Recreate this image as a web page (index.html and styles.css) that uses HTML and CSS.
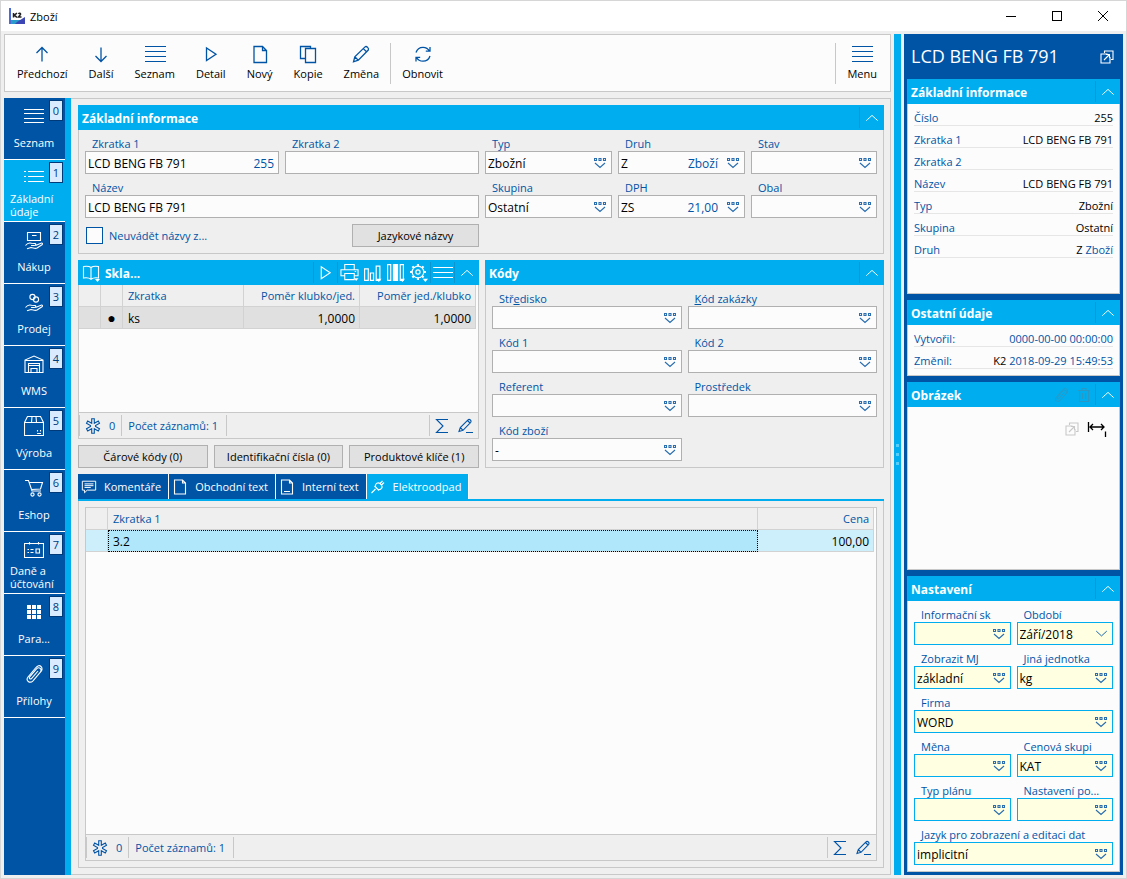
FILE: index.html
```html
<!DOCTYPE html>
<html lang="cs">
<head>
<meta charset="utf-8">
<title>Zboží</title>
<link rel="stylesheet" href="styles.css">
</head>
<body>
<svg class="sprite" aria-hidden="true">
  <symbol id="i-up" viewBox="0 0 20 20"><path d="M10 17.500V3.500M4.500 9L10 3.500 15.500 9"/></symbol>
  <symbol id="i-down" viewBox="0 0 20 20"><path d="M10 3.500v14M4.500 12L10 17.500 15.500 12"/></symbol>
  <symbol id="i-lines" viewBox="0 0 22 20"><path d="M.5 2.500h21M.5 7.500h21M.5 12.500h21M.5 17.500h21"/></symbol>
  <symbol id="i-play" viewBox="0 0 20 20"><path d="M5.500 4v12.500L15 10.200z"/></symbol>
  <symbol id="i-page" viewBox="0 0 20 20"><path d="M4 2.500h8.500l4 4v12H4zM12.500 2.500v4h4"/></symbol>
  <symbol id="i-copy" viewBox="0 0 20 20"><path d="M7.500 14.500H2.500V2.500h10v2M7.500 4.500h10v14h-10z"/></symbol>
  <symbol id="i-pencil" viewBox="0 0 20 20"><path d="M2.500 17.800l1.300-5L14 2.900c1.600-1.200 4.300 1.400 3.300 3.100L7.300 16.200zM3.800 12.800L7.300 16.200M12.300 4.600l3.200 3.200"/></symbol>
  <symbol id="i-refresh" viewBox="0 0 20 20"><path d="M3 8.500C4 5.300 6.800 3.300 10 3.300c3 0 5.200 1.400 6.600 4M17 3v4.200h-4.200M17 12c-1 3.200-3.800 5.200-7 5.200-3 0-5.200-1.400-6.600-4M3 17.500v-4.200h4.200"/></symbol>
  <symbol id="i-list" viewBox="0 0 20 20"><path d="M4 3.500h16M4 8.500h16M4 13.500h16M0 3.500h2M0 8.500h2M0 13.500h2"/></symbol>
  <symbol id="i-buy" viewBox="0 0 20 20"><path d="M3.500 2.500h13v8h-13zM8 5.500h4.500M1.500 15.500c2-2.500 4-3 6-2.200l3.500.2c1.500.5.5 2-1 2H7M11.500 15.500l5.500-2.300c1.500-.5 2 .7 1 1.500l-5 3.300c-2 1.200-4-.5-6-.5l-4 1.200"/></symbol>
  <symbol id="i-sell" viewBox="0 0 20 20"><path d="M1.500 15.500c2-2.500 4-3 6-2.200l3.500.2c1.500.5.5 2-1 2H7M11.500 15.500l5.500-2.300c1.500-.5 2 .7 1 1.500l-5 3.300c-2 1.200-4-.5-6-.5l-4 1.200"/><circle cx="8.500" cy="5" r="2.600"/><circle cx="12" cy="7.500" r="2.600"/></symbol>
  <symbol id="i-wms" viewBox="0 0 20 20"><path d="M1 18.500V6L10 2l9 4v12.500zM4.500 18.500v-9h11v9M4.500 11.500h11M1 6.500h18M7 18.500v-4h6v4"/></symbol>
  <symbol id="i-box" viewBox="0 0 20 20"><path d="M.5 6.500L3.500.5h13l3 6v13H.5zM.5 6.500h19M8 .5l-.5 6M12 .5l.5 6M13.500 14v1.500M16.500 14v1.500M13 17.500h4"/></symbol>
  <symbol id="i-cart" viewBox="0 0 20 20"><path d="M1 2.500h3.500l3.500 10.500h9M5.300 4.500H18.500l-2 6.500-9.200.5"/><circle cx="8.500" cy="16.500" r="1.600"/><circle cx="15.500" cy="16.500" r="1.600"/></symbol>
  <symbol id="i-tax" viewBox="0 0 20 20"><path d="M.5 3.500h19v14H.5zM5.500 2v2.500M14.500 2v2.500M3.500 9.500H5M6.500 9.500h3M3.500 12.500H5M6.500 12.500h3M12 9h3.500v4H12z"/></symbol>
  <symbol id="i-grid" viewBox="0 0 20 20"><path class="solid" d="M3 3h4v4H3zM8 3h4v4H8zM13 3h4v4h-4zM3 8h4v4H3zM8 8h4v4H8zM13 8h4v4h-4zM3 13h4v4H3zM8 13h4v4H8zM13 13h4v4h-4z"/></symbol>
  <symbol id="i-clip" viewBox="0 0 20 20"><path d="M14 7l-6.500 7.500c-1.300 1.300-3-.2-1.800-1.700L12.500 4.800c2.700-2.600 6 .6 3.900 3.300L9 16.800c-3.200 3.200-7.700-.2-5-3.800L11.500 4C13.800 1.500 15.500 1 17 2.500s1.500 3.800-.6 5.600"/></symbol>
  <symbol id="i-chev" viewBox="0 0 16 10"><path d="M1.500 8L8 2l6.500 6"/></symbol>
  <symbol id="i-pick" viewBox="0 0 12 12"><path d="M.5 1.500h2v2h-2zM5 1.500h2v2H5zM9.500 1.500h2v2h-2zM1 6l5 4.500L11 6"/></symbol>
  <symbol id="i-book" viewBox="0 0 18 18"><path d="M9 3.500C7 2 4.500 2 1.500 2.500v11.500c3-.5 5.500-.3 7.500 1.200 2-1.500 4.500-1.700 7.500-1.200V2.500C13.500 2 11 2 9 3.500zM9 3.500v11.700"/><path class="solid" d="M13 15h5l-2.500 3z"/></symbol>
  <symbol id="i-print" viewBox="0 0 20 20"><path d="M5 7V1.500h10V7M5 13.500H1V7h18v6.500h-4M5 11h10v6.500H5zM15.500 9h1.500"/><path class="solid" d="M14.500 16h5L17 19z"/></symbol>
  <symbol id="i-chart" viewBox="0 0 18 18"><path d="M1.500 5.500h3.500v11H1.500zM7 9.500h3v7H7zM12.500 3H16v13.500h-3.500z"/><path class="solid" d="M12.500 15h5L15 18z"/></symbol>
  <symbol id="i-cols" viewBox="0 0 18 18"><path d="M1.500 1.500h3v15h-3zM13.500 1.500h3v15h-3z"/><path class="solid" d="M6.500 1h5v16h-5zM13 15h5l-2.500 3z"/></symbol>
  <symbol id="i-gear" viewBox="0 0 18 18"><circle cx="8.500" cy="8.500" r="5.500"/><circle cx="8.500" cy="8.500" r="2"/><path stroke-width="2" d="M8.500 1v2M8.500 14v2M1 8.500h2M14 8.500h2M3.200 3.200l1.400 1.400M12.400 12.400l1.400 1.400M3.200 13.800l1.400-1.400M12.400 4.600l1.400-1.400"/><path class="solid" d="M13 15h5l-2.500 3z"/></symbol>
  <symbol id="i-star" viewBox="0 0 16 16"><path d="M6.700.8h2.600v4.500l4-2.300 1.200 2.200-4 2.300v1l4 2.300-1.200 2.200-4-2.300v4.500H6.700v-4.500l-4 2.300-1.200-2.200 4-2.300v-1l-4-2.300L2.700 3l4 2.300z"/></symbol>
  <symbol id="i-sum" viewBox="0 0 14 16"><path d="M13 1.500H1.500L8 8l-6.500 6.500H13"/></symbol>
  <symbol id="i-edit" viewBox="0 0 16 16"><path d="M1 13.500L2.300 9.500 10 1.800c1.500-1.300 4 1 2.700 2.600L5 12.300zM9.500 2.500l2.500 2.500M2.300 9.500L5 12.300M8 14.500h7"/></symbol>
  <symbol id="i-note" viewBox="0 0 18 16"><path d="M1.500 1.500h15v10H7l-3 3v-3H1.500zM4 4.500h10M4 6.500h10M4 8.500h7"/></symbol>
  <symbol id="i-doc" viewBox="0 0 14 16"><path d="M1.500 1h8l3 3v11h-11zM9.500 1v3h3"/></symbol>
  <symbol id="i-doc2" viewBox="0 0 14 16"><path d="M1.500 1h8l3 3v11h-11zM9.500 1v3h3M4 12.500h6"/></symbol>
  <symbol id="i-plug" viewBox="0 0 16 16"><path d="M1.500 14l4-4M4.500 7l4.500 4.500M5.500 7.500C5 5 7.500 2.800 10 4.500l1.500 1.500c1.700 2.500-.5 5-3 4.500M10 4.500L12.500 2M11.500 6L14 3.500"/></symbol>
  <symbol id="i-ext" viewBox="0 0 14 14"><path d="M4.500 3V1H13v8.500h-2M7.500 4H1v9h9V7M4 10l5.500-5.500M6 4.500h3.500V8"/></symbol>
  <symbol id="i-trash" viewBox="0 0 14 16"><path d="M1 3.500h12M5 3V1.500h4V3M2.500 3.500v11h9v-11M5.500 6v6M8.500 6v6"/></symbol>
  <symbol id="i-width" viewBox="0 0 20 16"><path d="M1.500 1v10M3 6h14M6 3L3 6l3 3M14 3l3 3-3 3M18.500 10.500V16"/></symbol>
</svg>

<header class="titlebar">
  <svg class="app-logo" viewBox="0 0 16 16"><path fill="#fff" d="M2 0h14v11H2z"/><path fill="#4a6ad8" d="M0 0h2v16H0z"/><path fill="#2a9ccc" d="M2 12h14v4H2z"/><path fill="#3c46b4" d="M8 14l8-5v7H6z"/><path stroke="#222" stroke-width="1.500" fill="none" d="M4.500 5v4.500M8 5.200L5.200 7.200 8 9.300M9.500 6c.5-1 2.500-1 2 .5L9.500 9h3"/></svg>
  <h1>Zboží</h1>
  <div class="win-controls">
    <button type="button" aria-label="Minimalizovat"><svg viewBox="0 0 12 12"><path d="M1 6.500h10"/></svg></button>
    <button type="button" aria-label="Maximalizovat"><svg viewBox="0 0 12 12"><path d="M1.500 1.500h9v9h-9z"/></svg></button>
    <button type="button" aria-label="Zavřít"><svg class="smooth" viewBox="0 0 12 12"><path d="M1 1l10 10M11 1L1 11"/></svg></button>
  </div>
</header>

<div class="frame">
  <div class="left">
    <div class="toolbar">
      <button type="button"><svg><use href="#i-up"/></svg>Předchozí</button>
      <button type="button"><svg><use href="#i-down"/></svg>Další</button>
      <button type="button"><svg class="crisp"><use href="#i-lines"/></svg>Seznam</button>
      <button type="button"><svg><use href="#i-play"/></svg>Detail</button>
      <button type="button"><svg><use href="#i-page"/></svg>Nový</button>
      <button type="button"><svg><use href="#i-copy"/></svg>Kopie</button>
      <button type="button"><svg><use href="#i-pencil"/></svg>Změna</button>
      <span class="sep"></span>
      <button type="button"><svg><use href="#i-refresh"/></svg>Obnovit</button>
      <span class="sep push"></span>
      <button type="button"><svg class="crisp"><use href="#i-lines"/></svg>Menu</button>
    </div>

    <div class="content">
      <nav class="nav">
        <button type="button"><svg class="crisp"><use href="#i-lines"/></svg><span>Seznam</span><b>0</b></button>
        <button type="button" class="active two"><svg class="crisp"><use href="#i-list"/></svg><span>Základní údaje</span><b>1</b></button>
        <button type="button"><svg><use href="#i-buy"/></svg><span>Nákup</span><b>2</b></button>
        <button type="button"><svg><use href="#i-sell"/></svg><span>Prodej</span><b>3</b></button>
        <button type="button"><svg><use href="#i-wms"/></svg><span>WMS</span><b>4</b></button>
        <button type="button"><svg><use href="#i-box"/></svg><span>Výroba</span><b>5</b></button>
        <button type="button"><svg><use href="#i-cart"/></svg><span>Eshop</span><b>6</b></button>
        <button type="button" class="two"><svg><use href="#i-tax"/></svg><span>Daně a účtování</span><b>7</b></button>
        <button type="button"><svg><use href="#i-grid"/></svg><span>Para...</span><b>8</b></button>
        <button type="button"><svg><use href="#i-clip"/></svg><span>Přílohy</span><b>9</b></button>
      </nav>

      <main class="workspace">
        <section class="card">
          <div class="head"><h2>Základní informace</h2><button type="button" aria-label="Sbalit"><svg class="chev"><use href="#i-chev"/></svg></button></div>
          <div class="fields basic">
            <div class="field"><label for="f1">Zkratka 1</label><div class="box"><input id="f1" value="LCD BENG FB 791"><output>255</output></div></div>
            <div class="field"><label for="f2">Zkratka 2</label><div class="box"><input id="f2"></div></div>
            <div class="field"><label for="f3">Typ</label><div class="box"><input id="f3" value="Zbožní"><button type="button" aria-label="Vybrat"><svg><use href="#i-pick"/></svg></button></div></div>
            <div class="field"><label for="f4">Druh</label><div class="box"><input id="f4" value="Z"><output>Zboží</output><button type="button" aria-label="Vybrat"><svg><use href="#i-pick"/></svg></button></div></div>
            <div class="field"><label for="f5">Stav</label><div class="box"><input id="f5"><button type="button" aria-label="Vybrat"><svg><use href="#i-pick"/></svg></button></div></div>
            <div class="field wide"><label for="f6">Název</label><div class="box"><input id="f6" value="LCD BENG FB 791"></div></div>
            <div class="field"><label for="f7">Skupina</label><div class="box"><input id="f7" value="Ostatní"><button type="button" aria-label="Vybrat"><svg><use href="#i-pick"/></svg></button></div></div>
            <div class="field"><label for="f8">DPH</label><div class="box"><input id="f8" value="ZS"><output>21,00</output><button type="button" aria-label="Vybrat"><svg><use href="#i-pick"/></svg></button></div></div>
            <div class="field"><label for="f9">Obal</label><div class="box"><input id="f9"><button type="button" aria-label="Vybrat"><svg><use href="#i-pick"/></svg></button></div></div>
            <div class="wide options"><label class="check"><input type="checkbox">Neuvádět názvy z...</label><button type="button" class="btn">Jazykové názvy</button></div>
          </div>
        </section>

        <div class="pair">
          <div class="stack">
            <section class="card grow">
              <div class="head tools"><svg class="book"><use href="#i-book"/></svg><h2>Skla...</h2>
                <button type="button" aria-label="Spustit"><svg><use href="#i-play"/></svg></button>
                <button type="button" aria-label="Tisk"><svg><use href="#i-print"/></svg></button>
                <button type="button" class="plain" aria-label="Graf"><svg><use href="#i-chart"/></svg></button>
                <button type="button" class="plain" aria-label="Sloupce"><svg><use href="#i-cols"/></svg></button>
                <button type="button" class="plain" aria-label="Nastavení"><svg><use href="#i-gear"/></svg></button>
                <button type="button" aria-label="Nabídka"><svg class="menu" viewBox="0 0 20 16"><path d="M0 2.500h20M0 7.500h20M0 12.500h20"/></svg></button>
                <button type="button" aria-label="Sbalit"><svg class="chev"><use href="#i-chev"/></svg></button>
              </div>
              <div class="grid">
                <table>
                  <colgroup><col class="c-mark"><col class="c-mark"><col><col class="c-num"><col class="c-num"></colgroup>
                  <thead><tr><th></th><th></th><th>Zkratka</th><th class="num">Poměr klubko/jed.</th><th class="num">Poměr jed./klubko</th></tr></thead>
                  <tbody><tr><td></td><td class="dot">●</td><td>ks</td><td class="num">1,0000</td><td class="num">1,0000</td></tr></tbody>
                </table>
              </div>
              <div class="status"><span class="cell"><svg><use href="#i-star"/></svg>0</span><span class="cell">Počet záznamů: 1</span><span class="cell end"><button type="button" aria-label="Součet"><svg><use href="#i-sum"/></svg></button><button type="button" aria-label="Upravit"><svg><use href="#i-edit"/></svg></button></span></div>
            </section>
            <div class="btnrow">
              <button type="button" class="btn">Čárové kódy (0)</button>
              <button type="button" class="btn">Identifikační čísla (0)</button>
              <button type="button" class="btn">Produktové klíče (1)</button>
            </div>
          </div>

          <section class="card">
            <div class="head"><h2>Kódy</h2><button type="button" aria-label="Sbalit"><svg class="chev"><use href="#i-chev"/></svg></button></div>
            <div class="fields two-col">
              <div class="field"><label for="k1">Stř<u>e</u>disko</label><div class="box"><input id="k1"><button type="button" aria-label="Vybrat"><svg><use href="#i-pick"/></svg></button></div></div>
              <div class="field"><label for="k2"><u>K</u>ód zakázky</label><div class="box"><input id="k2"><button type="button" aria-label="Vybrat"><svg><use href="#i-pick"/></svg></button></div></div>
              <div class="field"><label for="k3">Kód 1</label><div class="box"><input id="k3"><button type="button" aria-label="Vybrat"><svg><use href="#i-pick"/></svg></button></div></div>
              <div class="field"><label for="k4">Kód 2</label><div class="box"><input id="k4"><button type="button" aria-label="Vybrat"><svg><use href="#i-pick"/></svg></button></div></div>
              <div class="field"><label for="k5">Referent</label><div class="box"><input id="k5"><button type="button" aria-label="Vybrat"><svg><use href="#i-pick"/></svg></button></div></div>
              <div class="field"><label for="k6">Prostředek</label><div class="box"><input id="k6"><button type="button" aria-label="Vybrat"><svg><use href="#i-pick"/></svg></button></div></div>
              <div class="field"><label for="k7">Kód zboží</label><div class="box"><input id="k7" value="-"><button type="button" aria-label="Vybrat"><svg><use href="#i-pick"/></svg></button></div></div>
            </div>
          </section>
        </div>

        <section class="tabs">
          <div class="tablist" role="tablist">
            <button type="button" role="tab"><svg><use href="#i-note"/></svg>Komentáře</button>
            <button type="button" role="tab"><svg><use href="#i-doc"/></svg>Obchodní text</button>
            <button type="button" role="tab"><svg><use href="#i-doc2"/></svg>Interní text</button>
            <button type="button" role="tab" class="active" aria-selected="true"><svg><use href="#i-plug"/></svg>Elektroodpad</button>
          </div>
          <div class="tabpanel">
            <div class="framed">
              <div class="grid main">
                <table>
                  <colgroup><col class="c-mark"><col><col class="c-num"></colgroup>
                  <thead><tr><th></th><th>Zkratka 1</th><th class="num">Cena</th></tr></thead>
                  <tbody><tr><td></td><td class="focus">3.2</td><td class="num">100,00</td></tr></tbody>
                </table>
              </div>
              <div class="status"><span class="cell"><svg><use href="#i-star"/></svg>0</span><span class="cell">Počet záznamů: 1</span><span class="cell end"><button type="button" aria-label="Součet"><svg><use href="#i-sum"/></svg></button><button type="button" aria-label="Upravit"><svg><use href="#i-edit"/></svg></button></span></div>
            </div>
          </div>
        </section>
      </main>
    </div>
  </div>

  <div class="splitter"><i></i><i></i><i></i></div>

  <aside class="side">
    <div class="side-title"><h2>LCD BENG FB 791</h2><button type="button" aria-label="Otevřít"><svg><use href="#i-ext"/></svg></button></div>
    <section class="card">
      <div class="head"><h2>Základní informace</h2><button type="button" aria-label="Sbalit"><svg class="chev"><use href="#i-chev"/></svg></button></div>
      <dl class="info tall">
        <div><dt>Číslo</dt><dd>255</dd></div>
        <div><dt>Zkratka 1</dt><dd>LCD BENG FB 791</dd></div>
        <div><dt>Zkratka 2</dt><dd></dd></div>
        <div><dt>Název</dt><dd>LCD BENG FB 791</dd></div>
        <div><dt>Typ</dt><dd>Zbožní</dd></div>
        <div><dt>Skupina</dt><dd>Ostatní</dd></div>
        <div><dt>Druh</dt><dd>Z <em>Zboží</em></dd></div>
      </dl>
    </section>
    <section class="card">
      <div class="head"><h2>Ostatní údaje</h2><button type="button" aria-label="Sbalit"><svg class="chev"><use href="#i-chev"/></svg></button></div>
      <dl class="info">
        <div><dt>Vytvořil:</dt><dd><em>0000-00-00 00:00:00</em></dd></div>
        <div><dt>Změnil:</dt><dd>K2 <em>2018-09-29 15:49:53</em></dd></div>
      </dl>
    </section>
    <section class="card grow">
      <div class="head"><h2>Obrázek</h2><button type="button" class="plain dim" aria-label="Připojit" disabled><svg><use href="#i-clip"/></svg></button><button type="button" class="plain dim" aria-label="Smazat" disabled><svg><use href="#i-trash"/></svg></button><button type="button" aria-label="Sbalit"><svg class="chev"><use href="#i-chev"/></svg></button></div>
      <div class="picture"><button type="button" class="faint" aria-label="Otevřít" disabled><svg><use href="#i-ext"/></svg></button><button type="button" aria-label="Šířka"><svg class="width"><use href="#i-width"/></svg></button></div>
    </section>
    <section class="card">
      <div class="head"><h2>Nastavení</h2><button type="button" aria-label="Sbalit"><svg class="chev"><use href="#i-chev"/></svg></button></div>
      <div class="fields two-col yellow">
        <div class="field"><label for="n1">Informační sk</label><div class="box"><input id="n1"><button type="button" aria-label="Vybrat"><svg><use href="#i-pick"/></svg></button></div></div>
        <div class="field"><label for="n2">Období</label><div class="box"><select id="n2"><option>Září/2018</option></select><svg class="drop" viewBox="0 0 16 10"><path d="M1.500 2L8 8l6.500-6"/></svg></div></div>
        <div class="field"><label for="n3">Zobrazit MJ</label><div class="box"><input id="n3" value="základní"><button type="button" aria-label="Vybrat"><svg><use href="#i-pick"/></svg></button></div></div>
        <div class="field"><label for="n4">Jiná jednotka</label><div class="box"><input id="n4" value="kg"><button type="button" aria-label="Vybrat"><svg><use href="#i-pick"/></svg></button></div></div>
        <div class="field wide"><label for="n5">Firma</label><div class="box"><input id="n5" value="WORD"><button type="button" aria-label="Vybrat"><svg><use href="#i-pick"/></svg></button></div></div>
        <div class="field"><label for="n6">Měna</label><div class="box"><input id="n6"><button type="button" aria-label="Vybrat"><svg><use href="#i-pick"/></svg></button></div></div>
        <div class="field"><label for="n7">Cenová skupi</label><div class="box"><input id="n7" value="KAT"><button type="button" aria-label="Vybrat"><svg><use href="#i-pick"/></svg></button></div></div>
        <div class="field"><label for="n8">Typ plánu</label><div class="box"><input id="n8"><button type="button" aria-label="Vybrat"><svg><use href="#i-pick"/></svg></button></div></div>
        <div class="field"><label for="n9">Nastavení po...</label><div class="box"><input id="n9"><button type="button" aria-label="Vybrat"><svg><use href="#i-pick"/></svg></button></div></div>
        <div class="field wide"><label for="n10">Jazyk pro zobrazení a editaci dat</label><div class="box"><input id="n10" value="implicitní"><button type="button" aria-label="Vybrat"><svg><use href="#i-pick"/></svg></button></div></div>
      </div>
    </section>
  </aside>
</div>
</body>
</html>
```
FILE: styles.css
```css
:root {
  --blue: #0054a6;
  --cyan: #00aeef;
  --gray: #efefef;
  --paper: #fcfcfc;
  --line: #c8c8c8;
}

* { box-sizing: border-box; }

body {
  margin: 0;
  min-height: 100vh;
  display: flex;
  flex-direction: column;
  border: 1px solid #d6d6d6;
  background: var(--gray);
  color: #000;
  font: 11px/15px "Open Sans", "Noto Sans", sans-serif;
}

h1, h2, dl, dd { margin: 0; }

button, input, select { font: inherit; color: inherit; }

button {
  border: 0;
  padding: 0;
  background: none;
  display: flex;
  align-items: center;
  justify-content: center;
}

svg {
  flex: none;
  width: 20px;
  height: 20px;
  fill: none;
  stroke: currentColor;
  stroke-width: 1.100;
}

.solid { fill: currentColor; stroke: none; }
.crisp { shape-rendering: crispEdges; }
.sprite { position: absolute; width: 0; height: 0; }

/* Title bar */
.titlebar {
  display: flex;
  align-items: center;
  height: 30px;
  padding-left: 8px;
  background: #fff;
}
.titlebar h1 { flex: 1; font-size: 11px; font-weight: 400; }
.app-logo { width: 16px; height: 16px; margin-right: 5px; stroke: none; }
.win-controls { display: flex; }
.win-controls button { width: 46px; height: 30px; }
.win-controls svg { width: 12px; height: 12px; stroke-width: 1; shape-rendering: crispEdges; }
.win-controls .smooth { shape-rendering: auto; }

.frame { flex: 1; display: flex; padding: 3px; }
.left { flex: 1; min-width: 0; display: flex; flex-direction: column; gap: 6px; }

/* Toolbar */
.toolbar {
  display: flex;
  align-items: center;
  gap: 1px;
  height: 58px;
  padding: 0 3px 0 2px;
  border: 1px solid var(--line);
  background: var(--paper);
}
.toolbar button {
  flex-direction: column;
  gap: 1px;
  padding: 0 10px;
  line-height: 18px;
}
.toolbar svg { color: var(--blue); stroke-width: 1.300; }
.toolbar .crisp { width: 22px; }
.toolbar .sep { width: 1px; height: 41px; background: var(--line); }
.toolbar .push { margin-left: auto; }

.content { flex: 1; display: flex; }

/* Section navigation */
.nav {
  flex: none;
  width: 67px;
  border-right: 6px solid var(--cyan);
  background: var(--blue);
  color: #fff;
}
.nav button {
  position: relative;
  flex-direction: column;
  justify-content: flex-start;
  width: 100%;
  height: 62px;
  padding: 8px 7px 0 6px;
  border-bottom: 1px solid #fff;
  line-height: 13px;
}
.nav button span { margin-top: 10px; }
.nav .two { align-items: stretch; text-align: left; }
.nav .two svg { align-self: center; }
.nav .two span { margin-top: 4px; }
.nav .active { background: var(--cyan); }
.nav b {
  position: absolute;
  top: 2px;
  right: 2px;
  width: 14px;
  height: 21px;
  border: 1px solid #003a78;
  background: #d9ecff;
  color: #003a78;
  font-weight: 400;
  line-height: 19px;
  text-align: center;
}

/* Workspace */
.workspace {
  flex: 1;
  min-width: 0;
  display: flex;
  flex-direction: column;
  gap: 6px;
  padding: 6px 6px 6px 7px;
  border: 1px solid var(--line);
  border-left: 0;
}

.card { display: flex; flex-direction: column; border: 1px solid var(--line); }
.card.grow { flex: 1; }
.head {
  display: flex;
  align-items: center;
  height: 25px;
  margin: -1px -1px 0;
  padding-left: 4px;
  background: var(--cyan);
  color: #fff;
}
.head h2 { flex: 1; padding-top: 2px; font-size: 12px; font-weight: 700; }
.head button { width: 25px; height: 21px; border-left: 1px solid #0a97d2; }
.head .plain { width: 23px; border-left: 0; }
.head .chev { width: 14px; height: 10px; }
.tools button { width: 24px; }
.tools button:last-child { width: 25px; }
.tools svg { width: 19px; height: 19px; }
.tools .book { width: 18px; height: 18px; margin-right: 5px; }
.tools .menu { width: 20px; height: 16px; }
.head .dim { color: #2b97c4; }
.dim svg { width: 16px; height: 16px; }

/* Form fields */
.fields { display: grid; gap: 0 6px; padding: 0 6px 6px; }
.basic { grid-template-columns: 194fr 194fr 127fr 127fr 126fr; }
.two-col { grid-template-columns: 1fr 1fr; }
.wide { grid-column: span 2; }
.field { min-width: 0; padding-top: 6px; }
.field label {
  display: block;
  height: 15px;
  padding-left: 7px;
  overflow: hidden;
  color: var(--blue);
  white-space: nowrap;
}
.box {
  display: flex;
  align-items: center;
  height: 23px;
  border: 1px solid #b0b0b0;
  background: var(--paper);
}
.box input, .box select {
  flex: 1;
  width: 0;
  min-width: 0;
  height: 100%;
  padding: 2px 2px 0;
  border: 0;
  background: none;
  font-size: 12px;
}
.box select { appearance: none; }
.box output { padding: 2px 4px 0 0; color: var(--blue); font-size: 12px; }
.box button { width: 22px; height: 100%; color: #2a6db0; }
.box button svg { width: 12px; height: 12px; }
.box .drop { width: 13px; height: 9px; margin-right: 4px; color: var(--blue); }
.yellow .box { border-color: var(--cyan); background: #ffffe1; }

.options { display: flex; justify-content: space-between; padding-top: 6px; }
.check { display: flex; align-items: center; gap: 6px; padding-left: 1px; color: var(--blue); }
.check input {
  appearance: none;
  width: 17px;
  height: 17px;
  margin: 0;
  border: 1px solid var(--blue);
  background: var(--paper);
}
.btn {
  height: 23px;
  border: 1px solid #b0b0b0;
  background: #e1e1e1;
  white-space: nowrap;
}
.options .btn { width: 127px; }

.pair { display: grid; grid-template-columns: 401fr 399fr; gap: 6px; }
.stack { display: flex; flex-direction: column; gap: 6px; min-width: 0; }
.btnrow { display: grid; grid-template-columns: repeat(3, 1fr); gap: 6px; }

/* Data grids */
.grid { flex: 1; padding-right: 2px; background: var(--paper); }
table { width: 100%; border-collapse: separate; border-spacing: 0; table-layout: fixed; }
.c-mark { width: 22px; }
.c-num { width: 116px; }
th, td {
  height: 22px;
  padding: 0 4px 0 5px;
  border-right: 1px solid #d2d2d2;
  border-bottom: 1px solid #d2d2d2;
  text-align: left;
  font-weight: 400;
  white-space: nowrap;
}
th { background: var(--gray); color: var(--blue); }
td { padding-top: 2px; background: #e0e0e0; font-size: 12px; }
.num { text-align: right; }
td.dot { padding: 0; text-align: center; font-size: 14px; }
.main td { background: #cceffb; }
.main td.focus { background: #b0e7fb; outline: 1px dotted #000; outline-offset: -1px; }

.status {
  display: flex;
  align-items: center;
  height: 26px;
  border-top: 1px solid var(--line);
  color: var(--blue);
}
.cell {
  display: flex;
  align-items: center;
  height: 21px;
  padding: 0 8px 0 6px;
  border-right: 1px solid var(--line);
}
.cell svg { width: 16px; height: 16px; }
.cell:first-child { gap: 8px; padding: 0 6px 0 5px; border-left: 1px solid var(--line); }
.end { gap: 8px; margin-left: auto; padding: 0 4px; border-left: 1px solid var(--line); border-right: 0; }

/* Tabs */
.tabs { flex: 1; display: flex; flex-direction: column; }
.tablist { display: flex; gap: 1px; border-bottom: 2px solid var(--cyan); }
.tablist button {
  height: 25px;
  padding: 0 7px 0 3px;
  gap: 7px;
  background: var(--blue);
  color: #fff;
  box-shadow: 1px 0 0 #fff;
}
.tablist svg { width: 16px; height: 16px; }
.tablist .active { background: var(--cyan); }
.tabpanel { flex: 1; display: flex; padding: 6px; border: 1px solid var(--line); border-top: 0; }
.framed { flex: 1; min-width: 0; display: flex; flex-direction: column; border: 1px solid var(--line); }

/* Splitter */
.splitter {
  flex: none;
  display: flex;
  flex-direction: column;
  justify-content: center;
  align-items: center;
  gap: 6px;
  width: 7px;
  margin: 0 3px;
  background: var(--cyan);
}
.splitter i { width: 3px; height: 3px; background: #59cdf6; }

/* Side panel */
.side {
  flex: none;
  display: flex;
  flex-direction: column;
  gap: 6px;
  width: 219px;
  padding: 0 3px 3px;
  background: var(--blue);
}
.side-title {
  display: flex;
  align-items: center;
  justify-content: space-between;
  height: 45px;
  margin-bottom: -6px;
  padding: 0 6px 0 4px;
  color: #fff;
}
.side-title h2 { font-size: 18px; font-weight: 400; }
.side-title svg { width: 14px; height: 14px; }
.side .card { background: var(--paper); }
.info { padding: 0 6px 6px; }
.info.tall { padding-bottom: 35px; }
.info div {
  display: flex;
  justify-content: space-between;
  height: 22px;
  padding-top: 6px;
  border-bottom: 1px solid #e6e6e6;
}
.info dt, .info em { color: var(--blue); font-style: normal; }
.picture { display: flex; justify-content: flex-end; gap: 8px; padding: 14px 12px; }
.picture svg { width: 14px; height: 14px; }
.picture .width { width: 20px; height: 16px; stroke-width: 1.300; }
.picture .faint { color: #c8c8c8; }
```
